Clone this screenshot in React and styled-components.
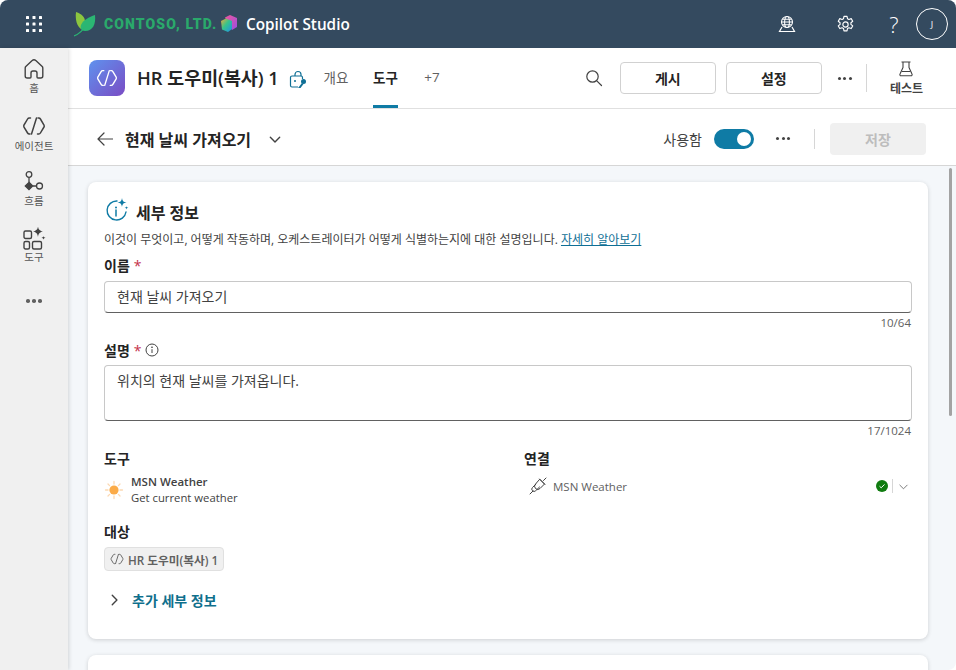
import styled, { createGlobalStyle } from "styled-components";

const Global = createGlobalStyle`
  html, body {
    margin: 0;
    padding: 0;
    background: #fff;
  }
  * {
    box-sizing: border-box;
  }
  body {
    font-family: "Open Sans", "Noto Sans CJK KR", sans-serif;
    color: #242424;
  }
`;

const Shell = styled.div`
  width: 956px;
  height: 670px;
  display: flex;
  flex-direction: column;
  overflow: hidden;
  border-radius: 8px 8px 8px 0;
  background: #f4f7fa;
`;

const TopBar = styled.header`
  height: 48px;
  flex: none;
  display: flex;
  align-items: center;
  background: #344a5f;
  color: #fff;
`;

const Waffle = styled.div`
  width: 68px;
  display: flex;
  justify-content: center;
`;

const Brand = styled.div`
  display: flex;
  align-items: center;
  margin-left: 6px;
  width: 146px;
  gap: 6px;
`;

const BrandName = styled.span`
  font-family: "Roboto", sans-serif;
  font-weight: 900;
  font-size: 14px;
  letter-spacing: 1.1px;
  color: #2aa96b;
  white-space: nowrap;
`;

const Product = styled.div`
  display: flex;
  align-items: center;
  gap: 8px;
  font-size: 15.3px;
  font-weight: 600;
  white-space: nowrap;
`;

const TopActions = styled.div`
  margin-left: auto;
  display: flex;
  align-items: center;
  padding-right: 8px;
`;

const TopIcon = styled.div`
  width: 58px;
  display: flex;
  justify-content: center;
  align-items: center;
`;

const HelpMark = styled.div`
  width: 40px;
  text-align: center;
  font-family: "Open Sans", sans-serif;
  font-size: 22px;
  font-weight: 300;
  line-height: 24px;
`;

const Avatar = styled.div`
  width: 32px;
  height: 32px;
  border: 1px solid #fff;
  border-radius: 50%;
  display: flex;
  align-items: center;
  justify-content: center;
  font-size: 9px;
  margin-left: 2px;
`;

const Body = styled.div`
  flex: 1;
  display: flex;
  min-height: 0;
`;

const Rail = styled.nav`
  width: 68px;
  flex: none;
  background: #f0f0f0;
  box-shadow: 1px 0 4px rgba(0, 0, 0, 0.14);
  display: flex;
  flex-direction: column;
  align-items: center;
  padding-top: 10px;
  z-index: 1;
`;

const RailItem = styled.div`
  height: 56px;
  display: flex;
  flex-direction: column;
  align-items: center;
  justify-content: flex-start;
  font-size: 10.5px;
  line-height: 13px;
  color: #555;
  white-space: nowrap;

  & svg {
    display: block;
    margin-bottom: ${(p) => p.$gap}px;
  }
`;

const RailDots = styled.div`
  margin-top: 17px;
  display: flex;
`;

const Main = styled.main`
  flex: 1;
  min-width: 0;
  display: flex;
  flex-direction: column;
  position: relative;
`;

const AgentBar = styled.div`
  height: 61px;
  flex: none;
  background: #fff;
  border-bottom: 1px solid #e0e0e0;
  display: flex;
  align-items: center;
  padding-left: 21px;
`;

const AgentLogo = styled.div`
  width: 36px;
  height: 36px;
  border-radius: 8px;
  background: linear-gradient(135deg, #5f92ee 0%, #7a4cc4 100%);
  display: flex;
  align-items: center;
  justify-content: center;
`;

const AgentName = styled.h1`
  margin: 0 0 0 12px;
  font-size: 18.4px;
  line-height: 24px;
  font-weight: 600;
  white-space: nowrap;
`;

const LockIcon = styled.div`
  margin-left: 10px;
  display: flex;
  padding-top: 3px;
`;

const Tabs = styled.div`
  height: 100%;
  display: flex;
  margin-left: 16px;
`;

const Tab = styled.div`
  height: 100%;
  width: ${(p) => p.$w}px;
  margin-right: ${(p) => p.$gap || 0}px;
  display: flex;
  align-items: center;
  justify-content: center;
  font-size: 13.5px;
  font-weight: ${(p) => (p.$active ? 700 : 400)};
  color: ${(p) => (p.$active ? "#242424" : "#616161")};
  border-bottom: 3px solid ${(p) => (p.$active ? "#0f7ba5" : "transparent")};
  white-space: nowrap;
`;

const AgentActions = styled.div`
  margin-left: auto;
  display: flex;
  align-items: center;
  padding-right: 33px;
`;

const OutlineButton = styled.button`
  width: 96px;
  height: 32px;
  background: #fff;
  border: 1px solid #d1d1d1;
  border-radius: 4px;
  font-family: inherit;
  font-size: 14px;
  font-weight: 600;
  color: #242424;
  margin-left: ${(p) => p.$ml}px;
  padding: 0;
`;

const Dots = styled.div`
  display: flex;
  gap: 2.5px;
  margin: ${(p) => p.$m || 0};

  & i {
    width: ${(p) => p.$size || 3}px;
    height: ${(p) => p.$size || 3}px;
    border-radius: 50%;
    background: ${(p) => p.$color || "#424242"};
  }
`;

const Divider = styled.div`
  width: 1px;
  height: ${(p) => p.$h}px;
  background: #d6d6d6;
  margin: ${(p) => p.$m};
`;

const TestButton = styled.div`
  display: flex;
  flex-direction: column;
  align-items: center;
  font-size: 12px;
  font-weight: 600;
  line-height: 16px;
  gap: 4px;
  color: #424242;
  white-space: nowrap;
  padding-top: 2px;
`;

const ToolBar = styled.div`
  height: 57px;
  flex: none;
  background: #fff;
  border-bottom: 1px solid #d6d6d6;
  display: flex;
  align-items: center;
  padding: 3px 30px 0 29px;
`;

const ToolTitle = styled.h2`
  margin: 0 0 0 12px;
  font-size: 16px;
  font-weight: 600;
  white-space: nowrap;
`;

const TitleChevron = styled.div`
  margin-left: 17px;
  display: flex;
`;

const Enabled = styled.span`
  margin-left: auto;
  font-size: 14px;
  color: #424242;
`;

const Toggle = styled.div`
  width: 40px;
  height: 20px;
  margin-left: 12px;
  border-radius: 10px;
  background: #0f7ba5;
  display: flex;
  justify-content: flex-end;
  align-items: center;
  padding-right: 3px;

  &::after {
    content: "";
    width: 14px;
    height: 14px;
    border-radius: 50%;
    background: #fff;
  }
`;

const SaveButton = styled.button`
  width: 96px;
  height: 32px;
  border: none;
  border-radius: 4px;
  background: #f0f0f0;
  font-family: inherit;
  font-size: 14px;
  font-weight: 600;
  color: #bdbdbd;
  padding: 0;
`;

const Content = styled.div`
  flex: 1;
  min-height: 0;
  padding: 16px 28px 0 20px;
  display: flex;
  flex-direction: column;
  gap: 16px;
  overflow: hidden;
`;

const Card = styled.section`
  flex: none;
  height: ${(p) => p.$h}px;
  background: #fff;
  border-radius: 8px;
  box-shadow: 0 1px 4px rgba(0, 0, 0, 0.16);
  padding: 14px 16px 0;
`;

const CardHead = styled.div`
  display: flex;
  align-items: center;
  height: 28px;
  gap: 7px;
  padding-left: 1px;
`;

const CardTitle = styled.h3`
  margin: 3px 0 0;
  font-size: 16px;
  font-weight: 600;
`;

const CardDesc = styled.p`
  margin: 8px 0 0;
  font-size: 12px;
  line-height: 16px;
  color: #424242;
  white-space: nowrap;

  & a {
    color: #0f6f95;
    text-decoration: underline;
  }
`;

const FieldLabel = styled.div`
  display: flex;
  align-items: center;
  gap: 4px;
  height: 20px;
  margin-top: ${(p) => p.$mt}px;
  font-size: 14px;
  font-weight: 600;
  color: #242424;
`;

const Star = styled.span`
  color: #c4314b;
  font-weight: 400;
`;

const TextBox = styled.div`
  height: ${(p) => p.$h}px;
  margin-top: ${(p) => p.$mt}px;
  border: 1px solid #c8c8c8;
  border-bottom: 1px solid #616161;
  border-radius: 4px;
  padding: ${(p) => p.$pt}px 12px 0;
  font-size: 14px;
  line-height: 20px;
  color: #424242;
`;

const Counter = styled.div`
  margin-top: 3px;
  padding-right: 1px;
  font-size: 11.5px;
  line-height: 14px;
  text-align: right;
  color: #616161;
`;

const TwoCols = styled.div`
  display: grid;
  grid-template-columns: 420px 1fr;
  margin-top: 10px;
`;

const ConnectorRow = styled.div`
  display: flex;
  align-items: center;
  margin-top: ${(p) => p.$mt || 0}px;
`;

const ToolIcon = styled.div`
  width: 27px;
  display: flex;
`;

const ToolName = styled.div`
  font-size: 11.5px;
  line-height: 16px;
  font-weight: 600;
  color: #424242;
`;

const ToolSub = styled.div`
  font-size: 11.3px;
  line-height: 16px;
  color: #424242;
`;

const ConnectionRow = styled.div`
  display: flex;
  align-items: center;
  height: 20px;
  margin-top: 8px;
  padding-left: 5px;
  font-size: 11.5px;
  color: #616161;
  gap: 6px;
`;

const ConnectionState = styled.div`
  margin-left: auto;
  display: flex;
  align-items: center;
  gap: 4px;
  padding-right: 3px;
`;

const TargetTag = styled.div`
  display: inline-flex;
  align-items: center;
  gap: 4px;
  height: 24px;
  margin-top: 6px;
  padding: 0 5px;
  background: #f0f0f0;
  border: 1px solid #e0e0e0;
  border-radius: 4px;
  font-size: 11.7px;
  font-weight: 600;
  color: #616161;
  white-space: nowrap;
`;

const MoreRow = styled.div`
  display: flex;
  align-items: center;
  gap: 11px;
  margin-top: 19px;
  padding-left: 3px;
  font-size: 14px;
  font-weight: 600;
  color: #0f6f8c;
`;

const Thumb = styled.div`
  position: absolute;
  top: 120px;
  right: 4px;
  width: 3px;
  height: 248px;
  border-radius: 2px;
  background: #a3a3a3;
`;

const AgentGlyph = ({ size = 24, color = "#424242", width = 1.5 }) => (
  <svg width={size} height={size} viewBox="0 0 24 24" fill="none" stroke={color} strokeWidth={width} strokeLinecap="round" strokeLinejoin="round">
    <path d="M8.5 4 H7.3 a2 2 0 0 0 -1.7 1 L2 11 a2 2 0 0 0 0 2 l3.6 6 a2 2 0 0 0 1.7 1 H8" />
    <path d="M15.5 20 h1.2 a2 2 0 0 0 1.7 -1 L22 13 a2 2 0 0 0 0 -2 l-3.6 -6 a2 2 0 0 0 -1.7 -1 H16" />
    <path d="M14.5 4 L9.5 20" />
  </svg>
);

const WaffleIcon = () => (
  <svg width="16" height="16" viewBox="0 0 16 16" fill="#fff">
    {[1.5, 8, 14.5].flatMap((y) =>
      [1.5, 8, 14.5].map((x) => <rect key={`${x}-${y}`} x={x - 1.5} y={y - 1.5} width="3" height="3" rx="0.6" />)
    )}
  </svg>
);

const LeafLogo = () => (
  <svg width="24" height="26" viewBox="0 0 24 26">
    <path d="M2 1 C8 3 11 6 11 11 C11 14 9 17 7 18 C3 15 1 9 2 1 Z" fill="#8cc63f" />
    <path d="M21 4 C22 13 19 20 11 20 C7 20 6 17 7 14 C9 9 15 6 21 4 Z" fill="#2bb673" />
    <path d="M0 25 C5 23 10 18 13 13" stroke="#2bb673" strokeWidth="1.2" fill="none" />
  </svg>
);

const CopilotLogo = () => (
  <svg width="18" height="20" viewBox="0 0 18 20">
    <defs>
      <linearGradient id="cpA" x1="0" y1="0" x2="1" y2="1">
        <stop offset="0" stopColor="#f0569c" />
        <stop offset="1" stopColor="#9a4fe0" />
      </linearGradient>
      <linearGradient id="cpB" x1="0" y1="0" x2="1" y2="1">
        <stop offset="0" stopColor="#f2a83a" />
        <stop offset="0.45" stopColor="#36c48a" />
        <stop offset="1" stopColor="#1f8fe8" />
      </linearGradient>
    </defs>
    <path d="M5 3.5 L10 1 L17 4 V13 L12 16 Z" fill="url(#cpA)" />
    <path d="M1 7 L6 4.5 L12 7 V15 L8 18 L2 15.5 Z" fill="url(#cpB)" />
  </svg>
);

const GlobeIcon = () => (
  <svg width="18" height="18" viewBox="0 0 18 18" fill="none" stroke="#fff" strokeWidth="1.1">
    <circle cx="9" cy="7" r="5.5" />
    <ellipse cx="9" cy="7" rx="2.4" ry="5.5" />
    <path d="M3.5 7 H14.5 M4.5 4.2 H13.5 M4.5 9.8 H13.5" />
    <path d="M4 12 L1.5 16.5 H16.5 L14 12" strokeWidth="1.2" />
  </svg>
);

const GearIcon = () => (
  <svg width="19" height="19" viewBox="0 0 20 20" fill="none" stroke="#fff" strokeWidth="1.2" strokeLinejoin="round">
    <path d="M8.4 1.4 h3.2 l.5 2.5 1.5.8 2.4-.9 1.6 2.8-1.9 1.6 v1.7 l1.9 1.6-1.6 2.8-2.4-.9-1.5.8-.5 2.5 h-3.2 l-.5-2.5-1.5-.8-2.4.9-1.6-2.8 1.9-1.6 v-1.7 L2.4 6.6 4 3.8 l2.4.9 1.5-.8 Z" />
    <circle cx="10" cy="10" r="2.8" />
  </svg>
);

const HomeIcon = () => (
  <svg width="22" height="22" viewBox="0 0 22 22" fill="none" stroke="#424242" strokeWidth="1.4" strokeLinejoin="round">
    <path d="M9.2 2.6 a2.6 2.6 0 0 1 3.6 0 l6.4 5.9 a2 2 0 0 1 .6 1.4 V18 a2 2 0 0 1-2 2 H15 a1 1 0 0 1-1-1 v-4 a2 2 0 0 0-2-2 h-2 a2 2 0 0 0-2 2 v4 a1 1 0 0 1-1 1 H4.2 a2 2 0 0 1-2-2 V9.9 a2 2 0 0 1 .6-1.4 Z" />
  </svg>
);

const FlowIcon = () => (
  <svg width="22" height="24" viewBox="0 0 22 24" fill="none" stroke="#424242" strokeWidth="1.3">
    <circle cx="6" cy="4.5" r="2.8" />
    <path d="M6 7.5 V12 M10 16 H13" />
    <path d="M6 12.3 L9.7 16 L6 19.7 L2.3 16 Z" fill="#424242" />
    <circle cx="16.5" cy="16" r="3" />
  </svg>
);

const ToolsIcon = () => (
  <svg width="23" height="24" viewBox="0 0 23 24" fill="none" stroke="#424242" strokeWidth="1.4">
    <rect x="1" y="5" width="7.5" height="7.5" rx="1.5" />
    <rect x="1" y="15.5" width="5.5" height="7.5" rx="1.5" />
    <rect x="9.5" y="15.5" width="9" height="7.5" rx="1.5" />
    <path d="M15 0.5 C15.5 3.5 16.5 4.6 20 5.5 C16.5 6.4 15.5 7.5 15 11 C14.5 7.5 13.5 6.4 10 5.5 C13.5 4.6 14.5 3.5 15 0.5 Z" fill="#424242" stroke="none" />
    <path d="M20.5 10 C20.7 11 21 11.4 22.6 11.7 C21 12 20.7 12.4 20.5 13.8 C20.3 12.4 20 12 18.4 11.7 C20 11.4 20.3 11 20.5 10 Z" fill="#424242" stroke="none" />
  </svg>
);

const LockKeyIcon = () => (
  <svg width="18" height="20" viewBox="0 0 18 20" fill="none">
    <path d="M6 6 V4.5 a3 3 0 0 1 6 0 V6" stroke="#0f6f95" strokeWidth="1.2" />
    <path d="M9 17 H3 a1.5 1.5 0 0 1-1.5-1.5 V7.5 A1.5 1.5 0 0 1 3 6 H12 a1.5 1.5 0 0 1 1.5 1.5 V9" stroke="#0f6f95" strokeWidth="1.2" />
    <circle cx="6" cy="11" r="1" fill="#0f6f95" />
    <circle cx="14.5" cy="11.5" r="2.5" fill="#0f6f95" />
    <path d="M13 13 L9 18 H11.5 L14.5 14" fill="#0f6f95" />
  </svg>
);

const SearchIcon = () => (
  <svg width="18" height="18" viewBox="0 0 18 18" fill="none" stroke="#424242" strokeWidth="1.2" strokeLinecap="round">
    <circle cx="7.5" cy="7.5" r="5.7" />
    <path d="M11.8 11.8 L16.5 16.5" />
  </svg>
);

const FlaskIcon = () => (
  <svg width="16" height="16" viewBox="0 0 16 16" fill="none" stroke="#424242" strokeWidth="1.1" strokeLinejoin="round">
    <path d="M3.5 1 H12.5 M5 1 V6.5 L2 13 a1.2 1.2 0 0 0 1.1 1.8 H12.9 A1.2 1.2 0 0 0 14 13 L11 6.5 V1" />
    <path d="M3.8 10.5 H12.2" />
  </svg>
);

const Chevron = ({ dir = "down", size = 12, color = "#424242", width = 1.2 }) => {
  const d = dir === "down" ? "M2 4.5 L6 8.5 L10 4.5" : "M4.5 2 L8.5 6 L4.5 10";
  return (
    <svg width={size} height={size} viewBox="0 0 12 12" fill="none" stroke={color} strokeWidth={width} strokeLinecap="round" strokeLinejoin="round">
      <path d={d} />
    </svg>
  );
};

const BackArrow = () => (
  <svg width="16" height="16" viewBox="0 0 16 16" fill="none" stroke="#424242" strokeWidth="1.2" strokeLinecap="round" strokeLinejoin="round">
    <path d="M7 2 L1 8 L7 14 M1 8 H15.5" />
  </svg>
);

const InfoSparkle = () => (
  <svg width="24" height="26" viewBox="0 0 24 26" fill="none">
    <path d="M12 4 A9.5 9.5 0 1 0 21 15" stroke="#0f7ba5" strokeWidth="1.4" strokeLinecap="round" />
    <circle cx="11" cy="10.5" r="1" fill="#0f7ba5" />
    <path d="M11 13 V19" stroke="#0f7ba5" strokeWidth="1.5" strokeLinecap="round" />
    <path d="M17 1 C17.5 4 18.3 5 21.5 5.5 C18.3 6 17.5 7 17 10 C16.5 7 15.7 6 12.5 5.5 C15.7 5 16.5 4 17 1 Z" fill="#0f7ba5" />
    <path d="M21.5 9 C21.7 10.2 22 10.5 23.4 10.8 C22 11.1 21.7 11.4 21.5 12.6 C21.3 11.4 21 11.1 19.6 10.8 C21 10.5 21.3 10.2 21.5 9 Z" fill="#0f7ba5" />
  </svg>
);

const SmallInfo = () => (
  <svg width="14" height="14" viewBox="0 0 14 14" fill="none" stroke="#424242" strokeWidth="1">
    <circle cx="7" cy="7" r="6" />
    <path d="M7 6.2 V10" />
    <circle cx="7" cy="4.2" r="0.4" fill="#424242" />
  </svg>
);

const SunIcon = () => (
  <svg width="20" height="20" viewBox="0 0 20 20" fill="none">
    <circle cx="10" cy="10" r="4.6" fill="#fbab48" />
    <path d="M10 1.5 V4 M10 16 V18.5 M1.5 10 H4 M16 10 H18.5 M4 4 L5.6 5.6 M14.4 14.4 L16 16 M16 4 L14.4 5.6 M5.6 14.4 L4 16" stroke="#fcd9b3" strokeWidth="1.3" strokeLinecap="round" />
  </svg>
);

const PlugIcon = () => (
  <svg width="18" height="18" viewBox="0 0 18 18" fill="none" stroke="#424242" strokeWidth="1" strokeLinecap="round" strokeLinejoin="round">
    <path d="M1 17 L4 14 M14.5 3.5 L17 1 M10.5 2 L16 7.5" />
    <path d="M11 2.5 L15.5 7 L11 11.5 a3 3 0 0 1-4.5-4.5 Z" />
    <path d="M7 7 L3.5 10.5 a2.2 2.2 0 0 0 0 3.2 a2.2 2.2 0 0 0 3.2 0 L10.5 10" />
  </svg>
);

const StatusOk = () => (
  <svg width="12" height="12" viewBox="0 0 12 12">
    <circle cx="6" cy="6" r="6" fill="#107c10" />
    <path d="M3.5 6.2 L5.2 7.8 L8.5 4.4" stroke="#fff" strokeWidth="1" fill="none" />
  </svg>
);

const RailEntry = ({ icon, label, gap }) => (
  <RailItem $gap={gap}>
    {icon}
    <span>{label}</span>
  </RailItem>
);

const ThreeDots = (props) => (
  <Dots {...props}>
    <i />
    <i />
    <i />
  </Dots>
);

export default function App() {
  return (
    <Shell>
      <Global />
      <TopBar>
        <Waffle>
          <WaffleIcon />
        </Waffle>
        <Brand>
          <LeafLogo />
          <BrandName>CONTOSO, LTD.</BrandName>
        </Brand>
        <Product>
          <CopilotLogo />
          <span>Copilot Studio</span>
        </Product>
        <TopActions>
          <TopIcon>
            <GlobeIcon />
          </TopIcon>
          <TopIcon>
            <GearIcon />
          </TopIcon>
          <HelpMark>?</HelpMark>
          <Avatar>J</Avatar>
        </TopActions>
      </TopBar>
      <Body>
        <Rail>
          <RailEntry icon={<HomeIcon />} label="홈" gap={2} />
          <RailEntry icon={<AgentGlyph size={24} />} label="에이전트" gap={2} />
          <RailEntry icon={<FlowIcon />} label="흐름" gap={1} />
          <RailEntry icon={<ToolsIcon />} label="도구" gap={1} />
          <RailDots>
            <ThreeDots $size={3.5} $color="#616161" />
          </RailDots>
        </Rail>
        <Main>
          <AgentBar>
            <AgentLogo>
              <AgentGlyph size={22} color="#fff" />
            </AgentLogo>
            <AgentName>HR 도우미(복사) 1</AgentName>
            <LockIcon>
              <LockKeyIcon />
            </LockIcon>
            <Tabs>
              <Tab $w={26} $gap={24}>개요</Tab>
              <Tab $w={25} $gap={25} $active>도구</Tab>
              <Tab $w={18}>+7</Tab>
            </Tabs>
            <AgentActions>
              <SearchIcon />
              <OutlineButton $ml={17}>게시</OutlineButton>
              <OutlineButton $ml={10}>설정</OutlineButton>
              <ThreeDots $m="0 0 0 16px" />
              <Divider $h={28} $m="0 23px 0 14px" />
              <TestButton>
                <FlaskIcon />
                <span>테스트</span>
              </TestButton>
            </AgentActions>
          </AgentBar>
          <ToolBar>
            <BackArrow />
            <ToolTitle>현재 날씨 가져오기</ToolTitle>
            <TitleChevron>
              <Chevron size={14} />
            </TitleChevron>
            <Enabled>사용함</Enabled>
            <Toggle />
            <ThreeDots $m="0 0 0 22px" />
            <Divider $h={20} $m="0 15px 0 24px" />
            <SaveButton>저장</SaveButton>
          </ToolBar>
          <Content>
            <Card $h={457}>
              <CardHead>
                <InfoSparkle />
                <CardTitle>세부 정보</CardTitle>
              </CardHead>
              <CardDesc>
                이것이 무엇이고, 어떻게 작동하며, 오케스트레이터가 어떻게 식별하는지에 대한 설명입니다.{" "}
                <a>자세히 알아보기</a>
              </CardDesc>
              <FieldLabel $mt={7}>
                이름 <Star>*</Star>
              </FieldLabel>
              <TextBox $h={32} $mt={6} $pt={5}>현재 날씨 가져오기</TextBox>
              <Counter>10/64</Counter>
              <FieldLabel $mt={10}>
                설명 <Star>*</Star> <SmallInfo />
              </FieldLabel>
              <TextBox $h={56} $mt={5} $pt={5}>위치의 현재 날씨를 가져옵니다.</TextBox>
              <Counter>17/1024</Counter>
              <TwoCols>
                <div>
                  <FieldLabel $mt={0}>도구</FieldLabel>
                  <ConnectorRow $mt={6}>
                    <ToolIcon>
                      <SunIcon />
                    </ToolIcon>
                    <div>
                      <ToolName>MSN Weather</ToolName>
                      <ToolSub>Get current weather</ToolSub>
                    </div>
                  </ConnectorRow>
                </div>
                <div>
                  <FieldLabel $mt={0}>연결</FieldLabel>
                  <ConnectionRow>
                    <PlugIcon />
                    <span>MSN Weather</span>
                    <ConnectionState>
                      <StatusOk />
                      <Divider $h={14} $m="0 1px 0 0" />
                      <Chevron size={11} color="#616161" width={0.9} />
                    </ConnectionState>
                  </ConnectionRow>
                </div>
              </TwoCols>
              <FieldLabel $mt={15}>대상</FieldLabel>
              <TargetTag>
                <AgentGlyph size={14} color="#616161" width={1.6} />
                HR 도우미(복사) 1
              </TargetTag>
              <MoreRow>
                <Chevron dir="right" size={14} />
                추가 세부 정보
              </MoreRow>
            </Card>
            <Card $h={100} />
          </Content>
          <Thumb />
        </Main>
      </Body>
    </Shell>
  );
}
